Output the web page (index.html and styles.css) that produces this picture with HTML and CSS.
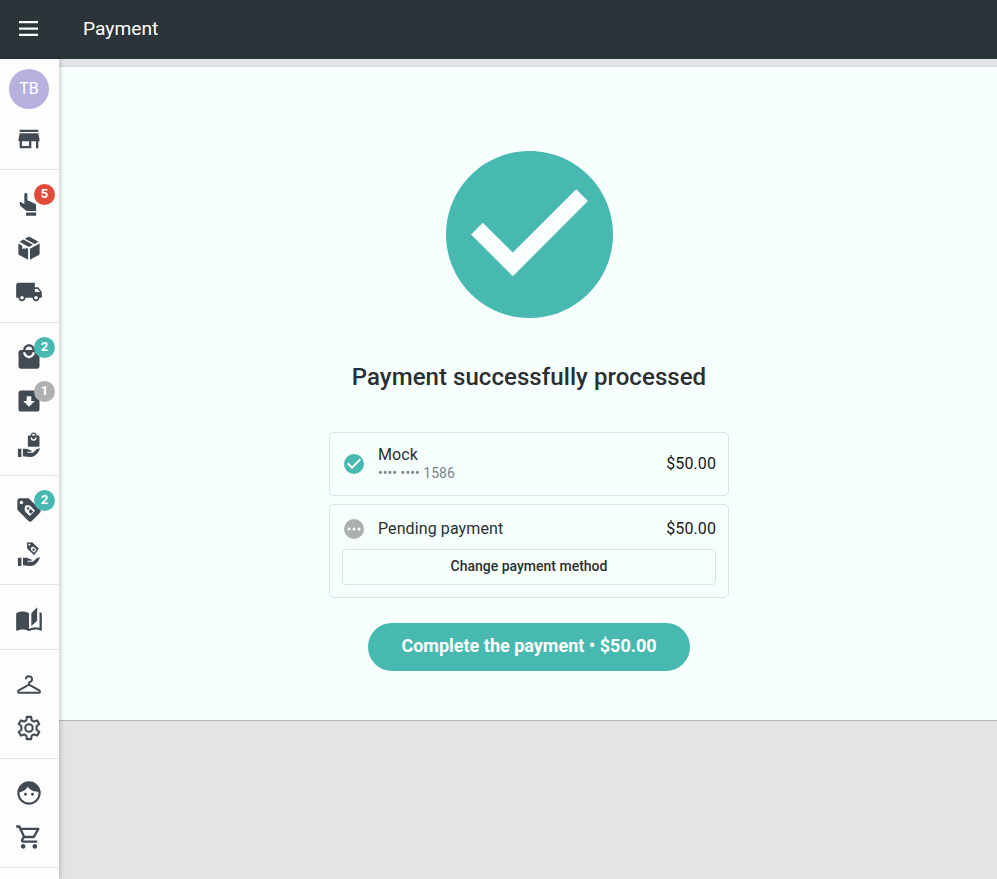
FILE: index.html
```html
<!DOCTYPE html>
<html lang="en">
<head>
    <meta charset="UTF-8">
    <meta name="viewport" content="width=device-width, initial-scale=1.0">
    <title>Payment</title>
    <link rel="stylesheet" href="styles.css">
</head>
<body>
    <header class="topbar">
        <button class="menu-btn" aria-label="Menu">
            <svg viewBox="0 0 19 15"><path d="M0 0h19v2.3H0zM0 6.4h19v2.3H0zM0 12.7h19V15H0z"/></svg>
        </button>
        <h1 class="page-title">Payment</h1>
    </header>

    <div class="layout">
        <nav class="sidebar">
            <div class="nav-group nav-group-first">
                <div class="avatar">TB</div>
                <a class="nav-item">
                    <svg viewBox="0 0 24 24"><path d="M20 4H4v2h16V4zm1 10v-2l-1-5H4l-1 5v2h1v6h10v-6h4v6h2v-6h1zm-9 4H6v-4h6v4z"/></svg>
                </a>
            </div>
            <div class="nav-group">
                <a class="nav-item">
                    <svg viewBox="0 0 24 24"><path d="M9.3 2.6c.9 0 1.3.6 1.3 1.3v5.2l1 .1 5.3 2.3c.7.3 1.2 1 1.2 1.8v4.7H9.800L4.500 13.400l-.6-2.700.8-.7 3.300 2.200V3.900c0-.7.5-1.300 1.300-1.300zM9.500 19.300h8.600v2.700H9.500z"/></svg>
                    <span class="badge badge-red">5</span>
                </a>
                <a class="nav-item">
                    <svg viewBox="0 0 24 24"><path d="M2.900 8.200l3.300 1.800v3.100l1.500-.9 1.500.9v-1.500l2 1.100v9.400l-7.600-4.200c-.4-.3-.7-.7-.7-1.200zM21.100 8.200v8.500c0 .5-.3.9-.7 1.200l-7.600 4.200v-9.400zM3.800 6.700l3.400-1.900 8.200 4.500-3.400 1.900zM8.400 4.100l2.900-1.600c.4-.2 1-.2 1.400 0l7.500 4.200-3.400 1.900z"/></svg>
                </a>
                <a class="nav-item">
                    <svg viewBox="0 0 24 24"><path d="M20 8h-3V4H3c-1.100 0-2 .9-2 2v11h2c0 1.660 1.340 3 3 3s3-1.340 3-3h6c0 1.660 1.340 3 3 3s3-1.340 3-3h2v-5l-3-4zM6 18.500c-.83 0-1.500-.67-1.500-1.500s.67-1.500 1.500-1.500 1.500.67 1.500 1.500-.67 1.500-1.500 1.500zm13.500-9l1.960 2.500H17V9.500h2.500zm-1.500 9c-.83 0-1.500-.67-1.500-1.500s.67-1.500 1.500-1.500 1.500.67 1.500 1.500-.67 1.500-1.500 1.500z"/></svg>
                </a>
            </div>
            <div class="nav-group">
                <a class="nav-item">
                    <svg viewBox="0 0 24 24"><path d="M19 6h-2c0-2.760-2.240-5-5-5S7 3.240 7 6H5c-1.100 0-2 .9-2 2v12c0 1.100.9 2 2 2h14c1.100 0 2-.9 2-2V8c0-1.100-.9-2-2-2zm-7-3c1.660 0 3 1.340 3 3H9c0-1.660 1.340-3 3-3zm0 10c-2.760 0-5-2.240-5-5h2c0 1.660 1.340 3 3 3s3-1.340 3-3h2c0 2.760-2.240 5-5 5z"/></svg>
                    <span class="badge">2</span>
                </a>
                <a class="nav-item">
                    <svg viewBox="0 0 24 24"><path fill-rule="evenodd" d="M5 3h14c1.100 0 2 .9 2 2v14c0 1.100-.9 2-2 2H5c-1.100 0-2-.9-2-2V5c0-1.100.9-2 2-2zm5 5v4H7l5 5 5-5h-3V8z"/></svg>
                    <span class="badge badge-gray">1</span>
                </a>
                <a class="nav-item">
                    <svg viewBox="0 0 24 24"><path fill-rule="evenodd" d="M12 3.800h1.400C13.500 2.200 14.600 1.200 16 1.200s2.500 1 2.600 2.600H20c.6 0 1 .4 1 1V12.600c0 .6-.4 1-1 1h-8c-.6 0-1-.4-1-1V4.800c0-.6.4-1 1-1zm2.500 0h3c0-.9-.7-1.500-1.500-1.500s-1.500.6-1.500 1.500zm-1.100 1.700c0 1.600 1 2.900 2.600 2.900s2.600-1.300 2.600-2.900h-1.200c0 .9-.6 1.600-1.400 1.600s-1.400-.7-1.400-1.600z"/><path d="M2.500 15.200h3v7h-3zM6.800 15.200h3.100l3.600 1.300c.6.200.9.700.8 1.300h-3.500v.8h4.500l3.300-2.900c.9-.8 1.900-.7 2.900-.7-1.700 3.800-3.700 6.600-7.200 7.200-2.500.1-5-.3-7.500-.6z"/></svg>
                </a>
            </div>
            <div class="nav-group">
                <a class="nav-item">
                    <svg viewBox="0 0 24 24"><path d="M21.400 11.600l-9-9C12 2.200 11.500 2 11 2H4c-1.100 0-2 .9-2 2v7c0 .6.2 1.100.6 1.400l9 9c.8.800 2 .8 2.800 0l7-7c.8-.8.800-2 0-2.800z"/><g class="cutout"><circle cx="5.500" cy="5.500" r="1.500"/><path d="M9 8.200c1.500-.6 3.600-.3 4.700.8l3.500 3.600-4.600 4.600-3.500-3.500C8 12.600 8.100 10 9 8.200z"/></g><path d="M10.200 10.300l1.100-1 1.200 1.200-.8 1.300-1.300-.3zM12.200 12.400l1.300-1.200 2.100 2-2 2.100-1.700-1.600z"/></svg>
                    <span class="badge">2</span>
                </a>
                <a class="nav-item">
                    <svg viewBox="0 0 24 24"><path fill-rule="evenodd" d="M10.200 2.200L14.800 2 20.500 7.500 16.400 13 10.400 7.300zM12.300 3.200a.8.800 0 1 0 0 1.600.8.800 0 0 0 0-1.600zm1.200 3.500l.2 1.800 2.700 2.500 2.100-2.800-2.900-2.700z"/><path d="M15 7.200h1.300l.9 1.200-1 1.200-1.200-.9zM2.500 15.200h3v7h-3zM6.800 15.200h3.100l3.600 1.300c.6.200.9.700.8 1.300h-3.500v.8h4.500l3.300-2.900c.9-.8 1.900-.7 2.900-.7-1.700 3.800-3.700 6.600-7.200 7.200-2.500.1-5-.3-7.500-.6z"/></svg>
                </a>
            </div>
            <div class="nav-group">
                <a class="nav-item">
                    <svg viewBox="0 -1 24 24"><path d="M19 1l-5 5v11l5-4.500V1zM1 6v14.650c0 .25.250.5.5.5.1 0 .15-.05.25-.05C3.100 20.450 5.050 20 6.500 20c1.950 0 4.050.4 5.500 1.500V6c-1.450-1.100-3.550-1.500-5.500-1.500S2.450 4.900 1 6zm22 13.500V6c-.6-.45-1.250-.75-2-1v13.500c-1.100-.35-2.300-.5-3.500-.5-1.700 0-4.150.65-5.500 1.500v2c1.350-.85 3.800-1.500 5.500-1.500 1.650 0 3.350.3 4.750 1.050.1.050.15.050.25.050.25 0 .5-.25.5-.5v-1.100z"/></svg>
                </a>
            </div>
            <div class="nav-group">
                <a class="nav-item">
                    <svg viewBox="0 0 24 24"><path d="M12 12.500v-1.300c0-.5.300-.8.700-.9 1.100-.3 1.900-1.200 1.900-2.400 0-1.500-1.200-2.600-2.600-2.600S9.400 6.400 9.400 7.900M12 12.500l8.800 5c1.100.8.700 2-.6 2H3.800c-1.300 0-1.700-1.200-.6-2z" fill="none" stroke="#424b54" stroke-width="1.700"/></svg>
                </a>
                <a class="nav-item">
                    <svg viewBox="0 0 24 24"><path d="M10.200 2.500h3.600l.5 2.900 1.900 1.100 2.800-1 1.800 3.100-2.300 1.900v3l2.300 1.900-1.800 3.100-2.800-1-1.900 1.100-.5 2.900h-3.600l-.5-2.900-1.900-1.100-2.800 1-1.800-3.100 2.300-1.900v-3L3.200 8.600 5 5.500l2.800 1 1.900-1.100z" fill="none" stroke="#424b54" stroke-width="1.800" stroke-linejoin="round"/><circle cx="12" cy="12" r="3.200" fill="none" stroke="#424b54" stroke-width="1.800"/></svg>
                </a>
            </div>
            <div class="nav-group">
                <a class="nav-item">
                    <svg viewBox="0 0 24 24"><circle cx="12" cy="12" r="9.100" fill="none" stroke="#424b54" stroke-width="1.800"/><path d="M3 11.500C4 5.500 7.500 2.500 12 2.500s8.500 3.500 9 8.500c-4.500 0-8-1.300-10-4.400-1.500 2.500-4 4.200-8 4.900z"/><circle cx="9" cy="13" r="1.250"/><circle cx="15" cy="13" r="1.250"/></svg>
                </a>
                <a class="nav-item">
                    <svg viewBox="0 0 24 24"><path d="M15.550 13c.75 0 1.410-.41 1.750-1.030l3.580-6.490c.37-.66-.11-1.480-.87-1.480H5.210l-.94-2H1v2h2l3.600 7.590-1.350 2.440C4.520 15.370 5.480 17 7 17h12v-2H7l1.100-2h7.450zM6.160 6h12.150l-2.760 5H8.530L6.160 6zM7 18c-1.100 0-1.990.9-1.990 2S5.900 22 7 22s2-.9 2-2-.9-2-2-2zm10 0c-1.100 0-1.990.9-1.990 2s.89 2 1.990 2 2-.9 2-2-.9-2-2-2z"/></svg>
                </a>
            </div>
        </nav>

        <main class="content">
            <section class="payment-panel">
                <svg class="success-icon" viewBox="2 2 20 20"><path d="M12 2C6.480 2 2 6.480 2 12s4.480 10 10 10 10-4.480 10-10S17.520 2 12 2z"/><path class="tick" d="M10 17l-5-5 1.410-1.410L10 14.170l7.590-7.590L19 8l-9 9z"/></svg>
                <h2 class="success-title">Payment successfully processed</h2>

                <div class="payment-card payment-card-done">
                    <div class="payment-row">
                        <svg class="status-icon" viewBox="2 2 20 20"><circle cx="12" cy="12" r="10"/><path class="tick" d="M10 17l-5-5 1.410-1.410L10 14.170l7.590-7.590L19 8l-9 9z"/></svg>
                        <div class="payment-info">
                            <div class="payment-name">Mock</div>
                            <div class="payment-number">•••• •••• 1586</div>
                        </div>
                        <div class="payment-amount">$50.00</div>
                    </div>
                </div>

                <div class="payment-card payment-card-pending">
                    <div class="payment-row">
                        <svg class="status-icon status-pending" viewBox="2 2 20 20"><circle cx="12" cy="12" r="10"/><g class="tick"><circle cx="7" cy="12" r="1.500"/><circle cx="12" cy="12" r="1.500"/><circle cx="17" cy="12" r="1.500"/></g></svg>
                        <div class="payment-info">
                            <div class="payment-name">Pending payment</div>
                        </div>
                        <div class="payment-amount">$50.00</div>
                    </div>
                    <button class="change-btn">Change payment method</button>
                </div>

                <button class="complete-btn">Complete the payment • $50.00</button>
            </section>
        </main>
    </div>
</body>
</html>
```

FILE: styles.css
```css
* {
    margin: 0;
    padding: 0;
    box-sizing: border-box;
}

body {
    font-family: Roboto, "Liberation Sans", sans-serif;
    background: #e4e4e4;
    color: #2b2f32;
    height: 100vh;
    overflow: hidden;
}

button {
    font-family: inherit;
    cursor: pointer;
}

.topbar {
    height: 59px;
    background: #2a3439;
    color: #fff;
    display: flex;
    align-items: center;
}

.menu-btn {
    width: 59px;
    height: 59px;
    padding: 0 2px 2px 0;
    background: none;
    border: none;
    border-right: 1px solid #263035;
    display: flex;
    align-items: center;
    justify-content: center;
}

.menu-btn svg {
    width: 19px;
    height: 15px;
    fill: #fff;
}

.page-title {
    margin-left: 24px;
    padding-bottom: 2px;
    font-size: 19.2px;
    font-weight: 400;
}

.layout {
    display: flex;
    height: calc(100vh - 59px);
}

.sidebar {
    width: 59px;
    flex-shrink: 0;
    background: #fdfdfe;
    box-shadow: 1px 0 5px rgba(0, 0, 0, 0.22);
    z-index: 1;
}

.nav-group {
    padding: 12px 0 8px;
    border-bottom: 1px solid #e2e3e6;
}

.nav-group-first {
    padding-top: 10px;
}

.avatar {
    width: 40px;
    height: 40px;
    margin: 0 auto 8px 9px;
    border-radius: 50%;
    background: #b7b1e0;
    color: #fff;
    font-size: 16px;
    font-weight: 400;
    line-height: 40px;
    text-align: center;
}

.nav-item {
    position: relative;
    height: 44px;
    padding-right: 1px;
    display: flex;
    align-items: center;
    justify-content: center;
}

.nav-item svg {
    width: 28px;
    height: 28px;
    fill: #424b54;
}

.nav-item .cutout {
    fill: #fdfdfe;
}

.badge {
    position: absolute;
    top: 2px;
    left: 34px;
    width: 21px;
    height: 21px;
    border-radius: 50%;
    background: #48b9b0;
    color: #fff;
    font-size: 13px;
    font-weight: 700;
    line-height: 20px;
    text-align: center;
}

.badge-red {
    background: #e04b3a;
}

.badge-gray {
    background: #b0b0b1;
}

.content {
    flex: 1;
    padding-top: 8px;
    background: linear-gradient(#e2e5e9 6px, #d5dade 8px, #e4e4e4 8px);
}

.payment-panel {
    height: 654px;
    padding: 84px 0 0 2px;
    background: #f6fffe;
    border-bottom: 1px solid #b4b8b8;
    display: flex;
    flex-direction: column;
    align-items: center;
}

.success-icon {
    width: 167px;
    height: 167px;
    fill: #48b9b0;
}

.tick {
    fill: #f8fffe;
}

.success-title {
    margin: 43px 0 39px;
    font-size: 24px;
    font-weight: 500;
    line-height: 32px;
    letter-spacing: 0.06px;
}

.payment-card {
    width: 400px;
    border: 1px solid #d9e2e3;
    border-radius: 5px;
}

.payment-card-done {
    height: 64px;
    margin-bottom: 8px;
    padding: 12px;
}

.payment-card-pending {
    height: 94px;
    padding: 14px 12px 12px;
}

.payment-row {
    display: flex;
    align-items: center;
}

.status-icon {
    width: 20px;
    height: 20px;
    margin: 0 14px 0 2px;
    fill: #48b9b0;
}

.status-pending {
    fill: #adb0b0;
}

.payment-info {
    flex: 1;
}

.payment-name {
    font-size: 16px;
    line-height: 20px;
    letter-spacing: 0.1px;
}

.payment-number {
    color: #7d8385;
    font-size: 14px;
    line-height: 17px;
    letter-spacing: 0.05px;
}

.payment-amount {
    font-size: 16px;
    line-height: 18px;
    color: #16191b;
    letter-spacing: 0.1px;
}

.change-btn {
    width: 100%;
    height: 36px;
    margin-top: 10px;
    padding-bottom: 2px;
    background: transparent;
    border: 1px solid #d9e2e3;
    border-radius: 4px;
    color: #2b2f32;
    font-size: 14px;
    font-weight: 500;
}

.complete-btn {
    width: 322px;
    height: 48px;
    margin-top: 25px;
    padding-bottom: 3px;
    background: #48b9b0;
    border: none;
    border-radius: 24px;
    color: #fff;
    font-size: 18px;
    font-weight: 700;
}
```
